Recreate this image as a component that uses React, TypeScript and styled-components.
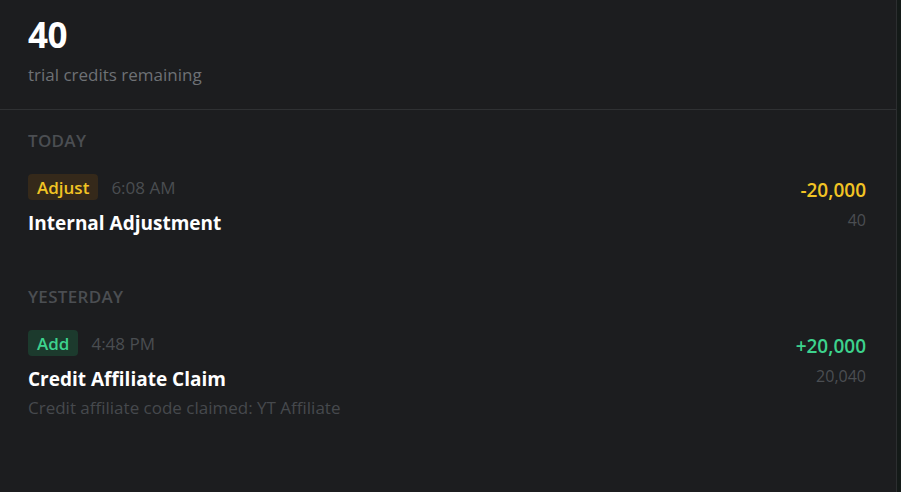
import React from "react";
import styled, { createGlobalStyle } from "styled-components";

const Global = createGlobalStyle`
  html, body { margin: 0; padding: 0; background: #131816; }
  body { font-family: "Open Sans", "Noto Sans", sans-serif; }
  #root { height: 492px; }
`;

const Shell = styled.div`
  display: flex;
  height: 492px;
  width: 901px;
  background: #141a18;
`;

const Panel = styled.div`
  width: 896px;
  height: 100%;
  background: #1c1d1f;
  border-right: 1px solid #2c2e30;
  display: flex;
  flex-direction: column;
`;

const Header = styled.div`
  padding: 13px 28px 22px;
  border-bottom: 1px solid #2f3133;
  display: flex;
  flex-direction: column;
`;

const Balance = styled.div`
  font-size: 35px;
  font-weight: 700;
  color: #ffffff;
  line-height: 44px;
  letter-spacing: -0.5px;
`;

const BalanceLabel = styled.div`
  font-size: 17px;
  color: #6e7175;
  line-height: 24px;
  margin-top: 6px;
`;

const Section = styled.div`
  padding: 20px 28px 0 28px;
  display: flex;
  flex-direction: column;
`;

const SectionTitle = styled.div`
  font-size: 17px;
  font-weight: 600;
  color: #4b4e52;
  letter-spacing: 0.3px;
  line-height: 22px;
  text-transform: uppercase;
`;

const Entry = styled.div`
  display: flex;
  justify-content: space-between;
  align-items: flex-start;
  padding: 22px 2px 0 0;
  min-height: 114px;
  box-sizing: border-box;
`;

const Left = styled.div`
  display: flex;
  flex-direction: column;
`;

const MetaRow = styled.div`
  display: flex;
  align-items: center;
  gap: 13px;
`;

const Badge = styled.span<{ $tone: "yellow" | "green" }>`
  display: inline-flex;
  align-items: center;
  height: 26px;
  padding: 0 9px;
  border-radius: 4px;
  font-size: 17px;
  font-weight: 600;
  background: ${(p) => (p.$tone === "yellow" ? "#35291a" : "#1c3a2d")};
  color: ${(p) => (p.$tone === "yellow" ? "#f2c424" : "#3dd28d")};
`;

const Time = styled.span`
  font-size: 17px;
  color: #4a4d51;
`;

const Title = styled.div`
  font-size: 19px;
  font-weight: 700;
  color: #ffffff;
  margin-top: 9px;
  line-height: 28px;
`;

const Desc = styled.div`
  font-size: 17px;
  color: #46494d;
  margin-top: 4px;
  line-height: 22px;
`;

const Right = styled.div`
  display: flex;
  flex-direction: column;
  align-items: flex-end;
  padding-top: 3px;
`;

const Amount = styled.div<{ $tone: "yellow" | "green" }>`
  font-size: 19px;
  font-weight: 600;
  line-height: 26px;
  color: ${(p) => (p.$tone === "yellow" ? "#f2c424" : "#3dd28d")};
`;

const After = styled.div`
  font-size: 16px;
  color: #4b4e52;
  line-height: 22px;
  margin-top: 6px;
`;

type Item = {
  badge: string;
  tone: "yellow" | "green";
  time: string;
  title: string;
  desc?: string;
  amount: string;
  after: string;
};

const groups: { label: string; items: Item[] }[] = [
  {
    label: "Today",
    items: [
      {
        badge: "Adjust",
        tone: "yellow",
        time: "6:08 AM",
        title: "Internal Adjustment",
        amount: "-20,000",
        after: "40",
      },
    ],
  },
  {
    label: "Yesterday",
    items: [
      {
        badge: "Add",
        tone: "green",
        time: "4:48 PM",
        title: "Credit Affiliate Claim",
        desc: "Credit affiliate code claimed: YT Affiliate",
        amount: "+20,000",
        after: "20,040",
      },
    ],
  },
];

export default function App() {
  return (
    <>
      <Global />
      <Shell>
        <Panel>
          <Header>
            <Balance>40</Balance>
            <BalanceLabel>trial credits remaining</BalanceLabel>
          </Header>
          {groups.map((g) => (
            <Section key={g.label}>
              <SectionTitle>{g.label}</SectionTitle>
              {g.items.map((it) => (
                <Entry key={it.title}>
                  <Left>
                    <MetaRow>
                      <Badge $tone={it.tone}>{it.badge}</Badge>
                      <Time>{it.time}</Time>
                    </MetaRow>
                    <Title>{it.title}</Title>
                    {it.desc && <Desc>{it.desc}</Desc>}
                  </Left>
                  <Right>
                    <Amount $tone={it.tone}>{it.amount}</Amount>
                    <After>{it.after}</After>
                  </Right>
                </Entry>
              ))}
            </Section>
          ))}
        </Panel>
      </Shell>
    </>
  );
}
